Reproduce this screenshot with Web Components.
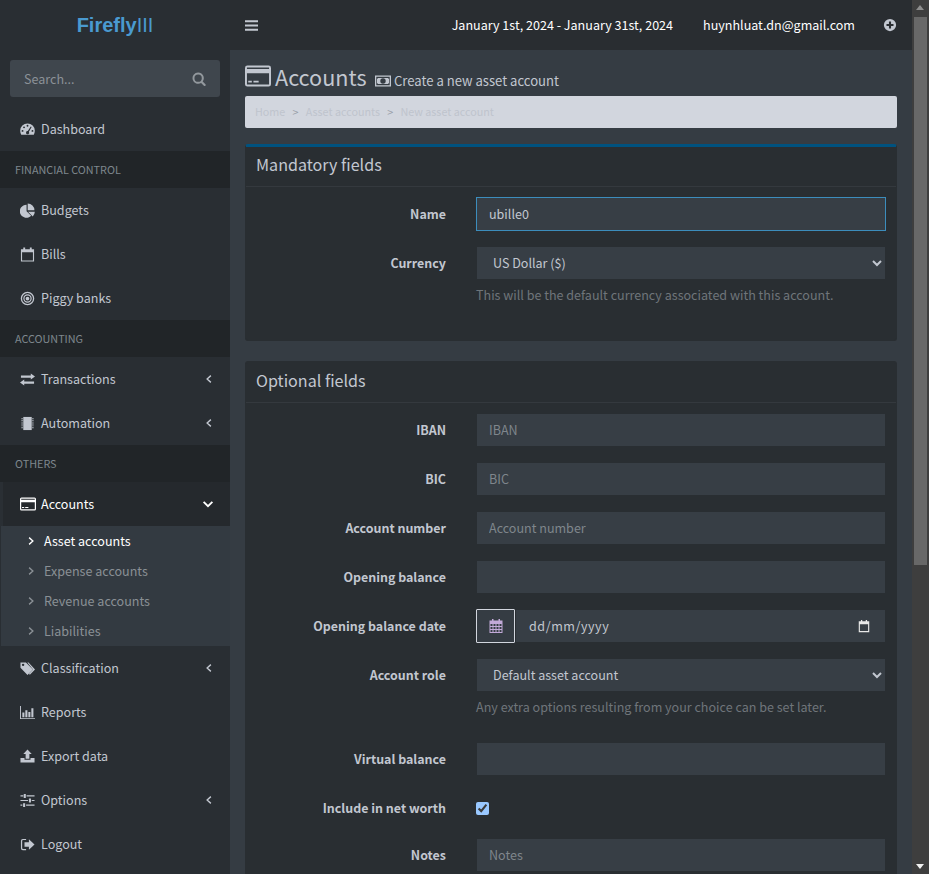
<!DOCTYPE html>
<html lang="en">
<head>
<meta charset="utf-8">
<title>Accounts</title>
<style>
    html, body { margin: 0; height: 100%; overflow: hidden; background: #353c43; }
    body { font: 12.55px/20px "Noto Sans CJK SC", "Noto Sans", sans-serif; color: #c2c7d0; }
</style>
</head>
<body>
<ff-app>
    <ff-sidebar slot="sidebar">
        <ff-nav-item icon="dashboard">Dashboard</ff-nav-item>
        <ff-nav-header>Financial control</ff-nav-header>
        <ff-nav-item icon="pie">Budgets</ff-nav-item>
        <ff-nav-item icon="calendar-o">Bills</ff-nav-item>
        <ff-nav-item icon="bullseye">Piggy banks</ff-nav-item>
        <ff-nav-header>Accounting</ff-nav-header>
        <ff-nav-item icon="exchange" caret="left">Transactions</ff-nav-item>
        <ff-nav-item icon="chip" caret="left">Automation</ff-nav-item>
        <ff-nav-header>Others</ff-nav-header>
        <ff-nav-item icon="card" caret="down" active>Accounts</ff-nav-item>
        <ff-subnav>
            <ff-subnav-item active>Asset accounts</ff-subnav-item>
            <ff-subnav-item>Expense accounts</ff-subnav-item>
            <ff-subnav-item>Revenue accounts</ff-subnav-item>
            <ff-subnav-item>Liabilities</ff-subnav-item>
        </ff-subnav>
        <ff-nav-item icon="tags" caret="left">Classification</ff-nav-item>
        <ff-nav-item icon="chart">Reports</ff-nav-item>
        <ff-nav-item icon="upload">Export data</ff-nav-item>
        <ff-nav-item icon="sliders" caret="left">Options</ff-nav-item>
        <ff-nav-item icon="signout">Logout</ff-nav-item>
    </ff-sidebar>
    <ff-topbar slot="topbar"></ff-topbar>
    <ff-page-title></ff-page-title>
    <ff-breadcrumb></ff-breadcrumb>
    <ff-box title="Mandatory fields" accent>
        <ff-field label="Name" value="ubille0" focus></ff-field>
        <ff-field label="Currency" help="This will be the default currency associated with this account." options="US Dollar ($)" kind="select"></ff-field>
    </ff-box>
    <ff-box title="Optional fields">
        <ff-field label="IBAN" placeholder="IBAN"></ff-field>
        <ff-field label="BIC" placeholder="BIC"></ff-field>
        <ff-field label="Account number" placeholder="Account number"></ff-field>
        <ff-field label="Opening balance"></ff-field>
        <ff-field label="Opening balance date" kind="date"></ff-field>
        <ff-field label="Account role" help="Any extra options resulting from your choice can be set later." options="Default asset account" kind="select"></ff-field>
        <ff-field label="Virtual balance"></ff-field>
        <ff-field label="Include in net worth" kind="checkbox"></ff-field>
        <ff-field label="Notes" placeholder="Notes"></ff-field>
    </ff-box>
</ff-app>

<script>
// font awesome 4 look, redrawn on a 16 unit grid
const ICONS = {
    bars: '<path d="M0 1.500h16v2.600H0zM0 6.700h16v2.600H0zM0 11.900h16v2.600H0z"/>',
    search: '<path fill-rule="evenodd" d="M7 .5a6.500 6.500 0 0 1 5.200 10.300l3.200 3.200a1.300 1.300 0 0 1-1.800 1.800l-3.200-3.200A6.500 6.500 0 1 1 7 .5zm0 2.300a4.200 4.200 0 1 0 0 8.400 4.200 4.200 0 0 0 0-8.400z"/>',
    dashboard: '<path fill-rule="evenodd" d="M8 1.500A7.800 7.800 0 0 0 .2 9.300c0 1.500.4 3 1.100 4.200h13.400c.7-1.200 1.100-2.700 1.100-4.200A7.800 7.800 0 0 0 8 1.500zM8 3a1 1 0 1 1 0 2 1 1 0 0 1 0-2zM4.300 4.700a1 1 0 1 1 0 2 1 1 0 0 1 0-2zM2.700 8.500a1 1 0 1 1 0 2 1 1 0 0 1 0-2zm10.600 0a1 1 0 1 1 0 2 1 1 0 0 1 0-2zm-1.800-3.700.9.500L9.500 10.400a1.700 1.700 0 1 1-1.200-.7z"/>',
    pie: '<path d="M7 1.800v6.900l4.900 4.900A7 7 0 1 1 7 1.800z"/><path d="M8.600 9.400H15.800a7 7 0 0 1-2.200 4.900zM8.200.6a7.200 7.200 0 0 1 7.200 7.200H8.200z"/>',
    'calendar-o': '<path fill-rule="evenodd" d="M3.500.5h2v2h5v-2h2v2H15v13H1v-13h2.500zM2.200 5.500v8.800h11.600V5.500z"/>',
    bullseye: '<path fill-rule="evenodd" d="M8 .8a7.200 7.200 0 1 1 0 14.400A7.200 7.200 0 0 1 8 .8zm0 1.400a5.800 5.800 0 1 0 0 11.600A5.800 5.800 0 0 0 8 2.200zm0 1.300a4.500 4.500 0 1 1 0 9 4.500 4.500 0 0 1 0-9zm0 1.300a3.200 3.200 0 1 0 0 6.400 3.200 3.200 0 0 0 0-6.400zM8 6a2 2 0 1 1 0 4 2 2 0 0 1 0-4z"/>',
    exchange: '<path d="M11.500 1.500 16 4.800 11.500 8V6H1V3.600h10.500zM4.500 8v2H15v2.400H4.500v2L0 11.200z"/>',
    chip: '<path d="M3.500 1h9v14h-9z"/><path d="M1.500 2h1.500v1H1.500zM1.500 4h1.500v1H1.500zM1.500 6h1.500v1H1.500zM1.500 8h1.500v1H1.500zM1.500 10h1.500v1H1.500zM1.500 12h1.500v1H1.500zM13 2h1.500v1H13zM13 4h1.500v1H13zM13 6h1.500v1H13zM13 8h1.500v1H13zM13 10h1.500v1H13zM13 12h1.500v1H13z"/>',
    card: '<path fill-rule="evenodd" d="M1.500 1.500h13A1.500 1.500 0 0 1 16 3v10a1.500 1.500 0 0 1-1.500 1.500h-13A1.500 1.500 0 0 1 0 13V3a1.500 1.500 0 0 1 1.500-1.500zM1.200 2.700v1h13.600v-1zm0 3.600v7h13.600v-7zM2 10.900h2.200v1.100H2zm3.200 0h3.200v1.100H5.200z"/>',
    tags: '<path fill-rule="evenodd" d="M.5 1.500h5.800l7.500 7.500-5.800 5.800L.5 7.300zm2.800 1.300a1.300 1.300 0 1 0 0 2.600 1.300 1.300 0 0 0 0-2.600z"/><path d="M7.800 1.500h1.300l6.900 7.500-5.500 5.700-1-1 4.400-4.700z"/>',
    chart: '<path d="M0 1h1v13h15v1H0z"/><path d="M2.500 8h2.200v5H2.500zM5.700 5.500h2.200v7.500H5.700zM8.900 7.500h2.200v5.500H8.900zM12.100 3.500h2.200V13h-2.200z"/>',
    upload: '<path d="M8 .5l4.500 4.700H10v5.300H6V5.200H3.500z"/><path d="M.5 9.500h4.300v2h6.400v-2h4.300v5H.5z"/>',
    sliders: '<path d="M.5 2.500h3v1.200h-3zM7 2.500h8.500v1.200H7zM4 1h2.200v4.200H4zM.5 7.400h8v1.200h-8zM12.500 7.400h3v1.200h-3zM9.500 5.900h2.200v4.200H9.500zM.5 12.300h2v1.200h-2zM6.500 12.300h9v1.200h-9zM3.300 10.800h2.200V15H3.300z"/>',
    signout: '<path d="M6.500 2H3A2 2 0 0 0 1 4v8a2 2 0 0 0 2 2h3.500v-1.300H3l-.7-.7V4l.7-.7h3.500z"/><path d="M9.500 2.500l6 5.500-6 5.500V10.300H4.800V5.700h4.700z"/>',
    'angle-left': '<path fill="none" stroke="currentColor" stroke-width="1.800" d="M10.500 3.500 5.500 8l5 4.500"/>',
    'angle-right': '<path fill="none" stroke="currentColor" stroke-width="1.800" d="M5.500 3.500 10.500 8l-5 4.500"/>',
    'angle-down': '<path fill="none" stroke="currentColor" stroke-width="2.100" d="M3 5.500 8 10.500l5-5"/>',
    money: '<path fill-rule="evenodd" d="M0 2.500h16v11H0zM1.300 3.800v8.400h13.400V3.800zM3 5h10a2 2 0 0 0 1 1v4a2 2 0 0 0-1 1H3a2 2 0 0 0-1-1V6a2 2 0 0 0 1-1zM8 5.300a2.700 2.700 0 1 0 0 5.400 2.700 2.700 0 0 0 0-5.400z"/>',
    plus: '<path fill-rule="evenodd" d="M8 1a7 7 0 1 1 0 14A7 7 0 0 1 8 1zM6.800 4v2.800H4v2.400h2.800V12h2.400V9.200H12V6.800H9.200V4z"/>',
    calendar: '<path fill-rule="evenodd" d="M1.500 2.500H4V1h1.500v1.500h5V1H12v1.500h2.500V15h-13zM2.500 6v2h2V6zm3 0v2h2V6zm3 0v2h2V6zm3 0v2h2V6zm-9 3v2h2V9zm3 0v2h2V9zm3 0v2h2V9zm3 0v2h2V9zm-9 3v2h2v-2zm3 0v2h2v-2zm3 0v2h2v-2zm3 0v2h2v-2z"/>',
    'date-picker': '<path fill-rule="evenodd" d="M2 2.500h2.500V1H6v1.500h4V1h1.500v1.500H14V15H2zM3.300 6v7.700h9.400V6z"/>',
}

class FfIcon extends HTMLElement {
    connectedCallback(){
        const root = this.shadowRoot || this.attachShadow({mode: 'open'})
        const size = this.getAttribute('size') || 16
        root.innerHTML = `<style>
            :host{ display: inline-flex; width: ${size}px; height: ${size}px; flex: none; }
            svg{ width: 100%; height: 100%; fill: currentColor; display: block; }
        </style>
        <svg viewBox="0 0 16 16">${ICONS[this.getAttribute('name')]}</svg>`
    }
}
customElements.define('ff-icon', FfIcon)

class FfApp extends HTMLElement {
    constructor(){
        super()
        this.attachShadow({mode: 'open'}).innerHTML = `<style>
            :host{ display: grid; grid-template-columns: 230px 682px 17px; grid-template-rows: 50px 824px; height: 874px; overflow: hidden; }
            .side{ grid-row: 1 / 3; }
            .top{ grid-column: 2; }
            main{ grid-column: 2; grid-row: 2; background: #353c43; padding: 14px 15px 0; overflow: hidden; }
            .scroll{ grid-column: 3; grid-row: 1 / 3; background: #3e3e3e; position: relative; }
            .thumb{ position: absolute; top: 17px; left: 2px; right: 2px; height: 548px; background: #686868; }
            .up, .down{ position: absolute; left: 4px; width: 0; height: 0; border: 4px solid transparent; }
            .up{ top: 5px; border-top: 0; border-bottom: 5px solid #8e8e8e; }
            .down{ bottom: 5px; border-bottom: 0; border-top: 5px solid #f1f1f1; }
        </style>
        <div class="side"><slot name="sidebar"></slot></div>
        <div class="top"><slot name="topbar"></slot></div>
        <main><slot></slot></main>
        <div class="scroll"><div class="up"></div><div class="thumb"></div><div class="down"></div></div>`
    }
}
customElements.define('ff-app', FfApp)

class FfSidebar extends HTMLElement {
    constructor(){
        super()
        this.attachShadow({mode: 'open'}).innerHTML = `<style>
            :host{ display: block; height: 874px; background: #292e33; overflow: hidden; }
            .logo{ height: 50px; display: flex; align-items: center; justify-content: center; font: 20px/50px "Liberation Sans", sans-serif; color: #4a9ad0; }
            .logo b{ font-weight: 700; }
            .search{ margin: 10px; height: 37px; background: #3f464d; border-radius: 3px; display: flex; align-items: center; padding: 0 14px; box-sizing: border-box; color: #8b9197; }
            .search span{ flex: 1; }
            ff-icon{ color: #92989d; }
        </style>
        <div class="logo"><b>Firefly</b>III</div>
        <div class="search"><span>Search...</span><ff-icon name="search" size="14"></ff-icon></div>
        <slot></slot>`
    }
}
customElements.define('ff-sidebar', FfSidebar)

class FfNavItem extends HTMLElement {
    connectedCallback(){
        const caret = this.getAttribute('caret')
        const active = this.hasAttribute('active')
        this.attachShadow({mode: 'open'}).innerHTML = `<style>
            :host{ display: flex; height: 44px; align-items: center; padding: 0 15px 0 20px; box-sizing: border-box; color: #c2c7d0; }
            :host([active]){ color: #fff; background: #25292d; border-left: 3px solid #2a2f34; padding-left: 17px; }
            .label{ flex: 1; margin-left: 6px; }
            :host([active]) .label{ margin-left: 5px; }
        </style>
        <ff-icon name="${this.getAttribute('icon')}" size="${active ? 16 : 15}"></ff-icon>
        <span class="label"><slot></slot></span>
        ${caret ? `<ff-icon name="angle-${caret}" size="${caret == 'down' ? 14 : 12}"></ff-icon>` : ''}`
    }
}
customElements.define('ff-nav-item', FfNavItem)

class FfNavHeader extends HTMLElement {
    constructor(){
        super()
        this.attachShadow({mode: 'open'}).innerHTML = `<style>
            :host{ display: block; height: 37px; line-height: 37px; padding-left: 15px; background: #212528; color: #7e878d; font-size: 10.8px; text-transform: uppercase; }
        </style><slot></slot>`
    }
}
customElements.define('ff-nav-header', FfNavHeader)

class FfSubnav extends HTMLElement {
    constructor(){
        super()
        this.attachShadow({mode: 'open'}).innerHTML = `<style>
            :host{ display: block; margin-left: 1px; background: #333a41; }
        </style><slot></slot>`
    }
}
customElements.define('ff-subnav', FfSubnav)

class FfSubnavItem extends HTMLElement {
    connectedCallback(){
        this.attachShadow({mode: 'open'}).innerHTML = `<style>
            :host{ display: flex; height: 30px; align-items: center; padding-left: 24px; color: #8a9095; }
            :host([active]){ color: #fff; }
            span{ margin-left: 7px; }
        </style>
        <ff-icon name="angle-right" size="12"></ff-icon><span><slot></slot></span>`
    }
}
customElements.define('ff-subnav-item', FfSubnavItem)

class FfTopbar extends HTMLElement {
    constructor(){
        super()
        this.attachShadow({mode: 'open'}).innerHTML = `<style>
            :host{ display: flex; align-items: center; height: 50px; background: #292d31; color: #fff; padding: 0 15px; box-sizing: border-box; }
            .toggle{ color: #c2c7d0; }
            .date{ margin-left: auto; }
            .mail{ margin-left: 30px; }
            .add{ margin-left: 28px; color: #c2c7d0; }
        </style>
        <ff-icon class="toggle" name="bars" size="13"></ff-icon>
        <span class="date">January 1st, 2024 - January 31st, 2024</span>
        <span class="mail">huynhluat.dn@gmail.com</span>
        <ff-icon class="add" name="plus" size="14"></ff-icon>`
    }
}
customElements.define('ff-topbar', FfTopbar)

class FfPageTitle extends HTMLElement {
    constructor(){
        super()
        this.attachShadow({mode: 'open'}).innerHTML = `<style>
            :host{ display: flex; align-items: center; height: 32px; color: #c2c7d0; }
            h1{ margin: -7px 0 0 4px; font-size: 21.6px; line-height: 32px; font-weight: 400; }
            .big{ margin-top: -8px; }
            small{ display: flex; align-items: center; margin: 1px 0 0 8.500px; font-size: 13.1px; line-height: 20px; }
            small ff-icon{ margin-right: 3px; }
        </style>
        <ff-icon class="big" name="card" size="26"></ff-icon>
        <h1>Accounts</h1>
        <small><ff-icon name="money" size="16"></ff-icon>Create a new asset account</small>`
    }
}
customElements.define('ff-page-title', FfPageTitle)

class FfBreadcrumb extends HTMLElement {
    constructor(){
        super()
        this.attachShadow({mode: 'open'}).innerHTML = `<style>
            :host{ display: flex; height: 32px; align-items: center; background: #d2d6de; border-radius: 2px; padding: 0 10px; font-size: 10.75px; color: #bfc4cd; margin-bottom: 16px; }
            i{ font-style: normal; padding: 0 7.250px; color: #999fa9; }
        </style>
        <span>Home</span><i>&gt;</i><span>Asset accounts</span><i>&gt;</i><span>New asset account</span>`
    }
}
customElements.define('ff-breadcrumb', FfBreadcrumb)

class FfBox extends HTMLElement {
    connectedCallback(){
        this.attachShadow({mode: 'open'}).innerHTML = `<style>
            :host{ display: block; background: #292e32; border: 1px solid #292e32; border-top-width: 2px; border-radius: 3px; margin-bottom: 20px; }
            :host([accent]){ border-top: 3px solid #00527f; }
            h3{ margin: 0; padding: 6px 10px; font-size: 16.1px; line-height: 22px; font-weight: 400; color: #c2c7d0; border-bottom: 1px solid #34393e; height: 40px; box-sizing: border-box; }
            .body{ padding: 10px; }
        </style>
        <h3>${this.getAttribute('title')}</h3>
        <div class="body"><slot></slot></div>`
    }
}
customElements.define('ff-box', FfBox)

class FfField extends HTMLElement {
    connectedCallback(){
        const kind = this.getAttribute('kind') || 'text'
        const help = this.getAttribute('help')
        this.attachShadow({mode: 'open'}).innerHTML = `<style>
            :host{ display: grid; grid-template-columns: 190px 1fr; column-gap: 30px; margin-bottom: 15px; }
            label{ text-align: right; font-weight: 700; font-size: 12.45px; padding-top: 7px; color: #c2c7d0; }
            input, select{ width: 100%; height: 34px; box-sizing: border-box; display: block; margin: 0; padding: 5px 12px 7px; border: 1px solid #292e32; background: #373e45; color: #c2c7d0; font: inherit; border-radius: 0; outline: 0; }
            input::placeholder{ color: #7f868c; }
            input.focus{ border-color: #3c8dbc; }
            select{ color-scheme: dark; }
            .check{ display: block; height: 32px; padding-top: 10px; box-sizing: border-box; }
            .check input{ width: 13px; height: 13px; padding: 0; margin: 1px 0 0; color-scheme: dark; accent-color: #99c8ff; }
            .help{ margin: 5px 0 10px; color: #6f757a; }
            .date{ display: flex; height: 34px; }
            .addon{ width: 39px; height: 34px; box-sizing: border-box; border: 1px solid #d2d6de; border-radius: 1px; display: flex; align-items: center; justify-content: center; color: #c2a9d8; background: #353c43; }
            .picker{ flex: 1; margin: 1px; display: flex; align-items: center; padding: 0 14px 0 13px; background: #373e45; color: #c2c7d0; letter-spacing: .55px; }
            .picker span{ flex: 1; }
            .picker ff-icon{ color: #e8e8e8; }
        </style>
        <label>${this.getAttribute('label')}</label>
        <div>${this.buildControl(kind)}${help ? `<p class="help">${help}</p>` : ''}</div>`
    }
    /**
     * Build the control for this row
     * @param {string} kind text, select, date or checkbox
     * @return {string}
     */
    buildControl(kind){
        if(kind == 'select'){
            return `<select><option>${this.getAttribute('options')}</option></select>`
        }
        if(kind == 'date'){
            return `<div class="date"><span class="addon"><ff-icon name="calendar" size="16"></ff-icon></span><div class="picker"><span>dd/mm/yyyy</span><ff-icon name="date-picker" size="14"></ff-icon></div></div>`
        }
        if(kind == 'checkbox'){
            return `<div class="check"><input type="checkbox" checked></div>`
        }
        const ph = this.getAttribute('placeholder')
        const val = this.getAttribute('value')
        return `<input${ph ? ` placeholder="${ph}"` : ''}${val ? ` value="${val}"` : ''}${this.hasAttribute('focus') ? ' class="focus"' : ''}>`
    }
}
customElements.define('ff-field', FfField)
</script>
</body>
</html>
